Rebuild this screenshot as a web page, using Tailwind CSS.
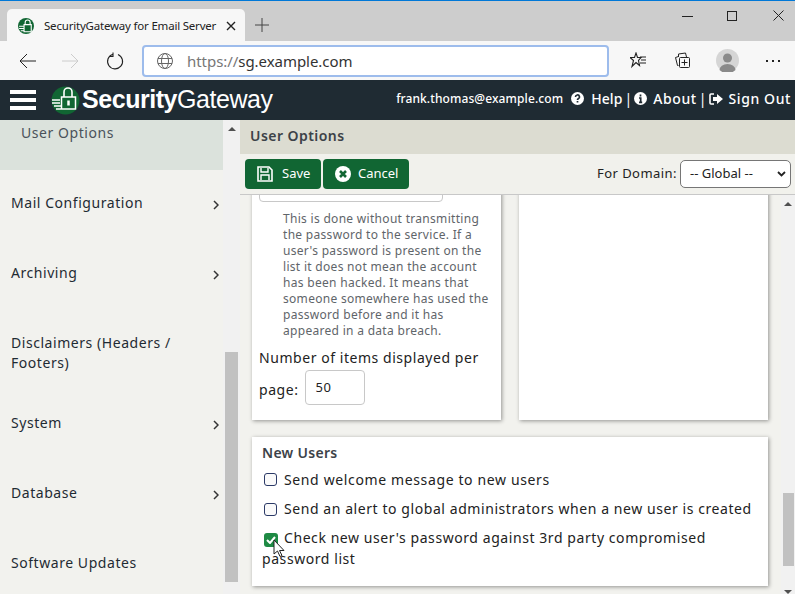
<!DOCTYPE html>
<html lang="en">
<head>
    <title>SecurityGateway for Email Servers</title>
    <meta charset="utf-8"/>
    <script src="https://cdn.jsdelivr.net/npm/@tailwindcss/browser@4"></script>
</head>
<body class="font-['Noto_Sans',sans-serif] overflow-hidden">
<div class="flex h-[594px] w-[795px] flex-col overflow-hidden bg-white">
    <!-- browser tab strip -->
    <div class="flex h-[41px] shrink-0 border-t border-[#0078d7] bg-[#cdcdcd]">
        <div class="ml-[7px] mt-[8px] flex h-[33px] w-[238px] items-center rounded-t-[5px] bg-[#f7f7f7] pl-[11px]">
            <svg class="h-[16px] w-[16px] shrink-0" viewBox="0 0 29 29">
                <circle cx="14.500" cy="14.500" r="14.500" fill="#116633"/>
                <path d="M13 12V8a4.500 4.500 0 0 1 9 0v4" fill="none" stroke="#fff" stroke-width="2"/>
                <path d="M11 12h13v13H11zM2 15h8M2 19h8M5 23h5" fill="none" stroke="#fff" stroke-width="2"/>
            </svg>
            <span class="ml-[10px] w-[178px] whitespace-nowrap text-[11.5px] tracking-[-0.2px] text-[#222]">SecurityGateway for Email Server</span>
            <svg class="ml-[4px] h-[10px] w-[10px] shrink-0" viewBox="0 0 10 10"><path d="M1 1l8 8M9 1l-8 8" stroke="#222" stroke-width="1.4"/></svg>
        </div>
        <svg class="ml-[10px] mt-[17px] h-[14px] w-[14px]" viewBox="0 0 14 14"><path d="M7 0v14M0 7h14" stroke="#444" stroke-width="1"/></svg>
        <div class="ml-auto flex">
            <svg class="mr-[34px] mt-[10px] h-[10px] w-[11px]" viewBox="0 0 11 10"><path d="M0 5.500h11" stroke="#222"/></svg>
            <svg class="mr-[35px] mt-[10px] h-[10px] w-[11px]" viewBox="0 0 11 10"><rect x=".5" y=".5" width="9" height="9" fill="none" stroke="#222"/></svg>
            <svg class="mr-[11px] mt-[9px] h-[11px] w-[11px]" viewBox="0 0 11 11"><path d="M.5.500l10 10M10.500.500l-10 10" stroke="#222"/></svg>
        </div>
    </div>
    <!-- browser toolbar -->
    <div class="flex h-[39px] shrink-0 items-center bg-[#f7f7f7]">
        <svg class="ml-[19px] h-[16px] w-[17px]" viewBox="0 0 17 16"><path d="M17 8H1M8 1L1 8l7 7" fill="none" stroke="#222" stroke-width="1"/></svg>
        <svg class="ml-[26px] h-[16px] w-[17px]" viewBox="0 0 17 16"><path d="M0 8h16M9 1l7 7-7 7" fill="none" stroke="#ccc" stroke-width="1"/></svg>
        <svg class="ml-[27px] h-[18px] w-[18px]" viewBox="0 0 18 18"><path d="M7 2.200A7.500 7.500 0 1 0 12 2.500M7 .5v4H3" fill="none" stroke="#222" stroke-width="1.100"/></svg>
        <div class="ml-[18px] flex h-[32px] w-[467px] items-center rounded-[4px] border-2 border-[#9dbcec] bg-white pl-[13px]">
            <svg class="h-[16px] w-[16px]" viewBox="0 0 16 16"><g fill="none" stroke="#666"><circle cx="8" cy="8" r="7.500"/><ellipse cx="8" cy="8" rx="3.500" ry="7.500"/><path d="M1 5.500h14M1 10.500h14"/></g></svg>
            <span class="ml-[14px] pt-[2px] text-[15px] tracking-[-0.05px] text-[#777]">https://<span class="text-[#333]">sg.example.com</span></span>
        </div>
        <svg class="ml-[21px] h-[17px] w-[17px]" viewBox="0 0 17 17"><path d="M6 1l1.500 4.500H11L8.500 8.500l1 5-3.500-3-4 4 1.500-6L0 5.500h4.500z" fill="none" stroke="#222" stroke-width="1.100"/><path d="M10 5h6M11 8h5M10 11h6" stroke="#222" stroke-width="1.200"/></svg>
        <svg class="ml-[27px] h-[17px] w-[17px]" viewBox="0 0 17 17"><path d="M4.500 13.500h-1l-2-8 3-1M4.500 5V2l7-1 1 4" fill="none" stroke="#222"/><rect x="5.500" y="5.500" width="10" height="10" rx="1" fill="none" stroke="#222"/><path d="M10.500 7.500v6M7.500 10.500h6" stroke="#222"/></svg>
        <svg class="ml-[25px] h-[23px] w-[23px]" viewBox="0 0 23 23"><circle cx="11.500" cy="11.500" r="11.500" fill="#d5d5d5"/><circle cx="11.500" cy="9" r="4.500" fill="#8a8a8a"/><path d="M3.500 21a8 6 0 0 1 16 0 11.500 11.500 0 0 1-16 0z" fill="#8a8a8a"/></svg>
        <div class="ml-[27px] flex gap-[4px]">
            <span class="h-[2px] w-[2px] bg-[#222]"></span><span class="h-[2px] w-[2px] bg-[#222]"></span><span class="h-[2px] w-[2px] bg-[#222]"></span>
        </div>
    </div>
    <!-- app header -->
    <div class="flex h-[40px] shrink-0 items-center bg-[#1f2b33] text-white">
        <div class="ml-[10px] flex w-[26px] flex-col gap-[4px]">
            <span class="h-[4px] bg-white"></span><span class="h-[4px] bg-white"></span><span class="h-[4px] bg-white"></span>
        </div>
        <svg class="ml-[15px] h-[29px] w-[29px] shrink-0" viewBox="0 0 29 29">
            <circle cx="14.500" cy="14.500" r="14" fill="#116633"/>
            <path d="M13 11V6a4 4 0 0 1 8 0v5" fill="none" stroke="#fff" stroke-width="1.600"/>
            <path d="M10.500 11h14v12h-14zM1 14h8M1 17h8M3 20h7M5 23h5" fill="none" stroke="#fff" stroke-width="1.500"/>
            <path d="M17.500 14.500v5" stroke="#fff" stroke-width="2.500"/>
        </svg>
        <span class="ml-[2px] whitespace-nowrap font-['Liberation_Sans',sans-serif] text-[25px] tracking-[-0.45px]"><b>Security</b>Gateway</span>
        <div class="ml-auto mr-[4px] flex items-center whitespace-nowrap pb-[3px]">
            <span class="text-[12px] font-medium tracking-[0.1px]">frank.thomas@example.com</span>
            <svg class="ml-[8px] h-[13px] w-[13px]" viewBox="0 0 13 13"><circle cx="6.500" cy="6.500" r="6.500" fill="#fff"/><path d="M4.500 5a2 2 0 1 1 2.800 1.800c-.6.300-.8.600-.8 1.200M6.500 9v1.500" fill="none" stroke="#1f2b33" stroke-width="1.700"/></svg>
            <span class="ml-[7px] text-[14px] font-medium tracking-[0.1px]">Help</span>
            <span class="ml-[2px] text-[14px]">|</span>
            <svg class="ml-[2px] h-[13px] w-[13px]" viewBox="0 0 13 13"><circle cx="6.500" cy="6.500" r="6.500" fill="#fff"/><path d="M6.500 2.500v2M5 6h1.700v4M5 10.300h3.200" fill="none" stroke="#1f2b33" stroke-width="1.700"/></svg>
            <span class="ml-[6px] text-[14px] font-medium tracking-[0.6px]">About</span>
            <span class="ml-[2px] text-[14px]">|</span>
            <svg class="ml-[2px] h-[12px] w-[14px]" viewBox="0 0 14 12"><path d="M5 1H2a1 1 0 0 0-1 1v8a1 1 0 0 0 1 1h3" fill="none" stroke="#fff" stroke-width="1.600"/><path d="M8 1l6 5-6 5V8H4V4h4z" fill="#fff"/></svg>
            <span class="ml-[6px] text-[14px] font-medium tracking-[0.6px]">Sign Out</span>
        </div>
    </div>
    <div class="flex min-h-0 flex-1">
        <!-- sidebar -->
        <div class="flex w-[240px] shrink-0 bg-[#f2f2ee]">
            <div class="w-[223px] shrink-0 overflow-hidden text-[14px] tracking-[0.55px] text-[#1f2b33]">
                <div class="h-[50px] bg-[#dbe2dc] pl-[21px] pt-[2px] text-[#4a525a]">User Options</div>
                <div class="flex h-[70px] items-start justify-between pl-[11px] pr-[4px] pt-[22px]">Mail Configuration
                    <svg class="mt-[8px] h-[10px] w-[6px]" viewBox="0 0 6 10"><path d="M1 1l4 4-4 4" fill="none" stroke="#333" stroke-width="1.500"/></svg>
                </div>
                <div class="flex h-[70px] items-start justify-between pl-[11px] pr-[4px] pt-[22px]">Archiving
                    <svg class="mt-[8px] h-[10px] w-[6px]" viewBox="0 0 6 10"><path d="M1 1l4 4-4 4" fill="none" stroke="#333" stroke-width="1.500"/></svg>
                </div>
                <div class="h-[90px] pl-[11px] pr-[30px] pt-[23px] leading-[20px]">Disclaimers (Headers / Footers)</div>
                <div class="flex h-[70px] items-start justify-between pl-[11px] pr-[4px] pt-[12px]">System
                    <svg class="mt-[8px] h-[10px] w-[6px]" viewBox="0 0 6 10"><path d="M1 1l4 4-4 4" fill="none" stroke="#333" stroke-width="1.500"/></svg>
                </div>
                <div class="flex h-[70px] items-start justify-between pl-[11px] pr-[4px] pt-[12px]">Database
                    <svg class="mt-[8px] h-[10px] w-[6px]" viewBox="0 0 6 10"><path d="M1 1l4 4-4 4" fill="none" stroke="#333" stroke-width="1.500"/></svg>
                </div>
                <div class="pl-[11px] pt-[12px]">Software Updates</div>
            </div>
            <div class="flex w-[17px] shrink-0 flex-col items-center bg-[#f1f1f1] pt-[7px]">
                <span class="h-0 w-0 border-x-[4px] border-b-[4px] border-x-transparent border-b-[#505050]"></span>
                <span class="mt-[221px] h-[230px] w-[13px] bg-[#c1c1c1]"></span>
            </div>
        </div>
        <!-- main panel -->
        <div class="flex min-w-0 flex-1 flex-col">
            <div class="flex h-[34px] shrink-0 items-center bg-[#dcdcd1] pb-[4px] pl-[10px] text-[14px] font-semibold tracking-[0.45px] text-[#3c4248]">User Options</div>
            <div class="flex h-[41px] shrink-0 items-center border-b border-[#c8c8c8] bg-[#f1f1ec] pl-[5px] pr-[4px]">
                <div class="flex h-[30px] w-[76px] items-center rounded-[4px] bg-[#116633] pl-[12px] text-[13px] text-white">
                    <svg class="h-[16px] w-[16px]" viewBox="0 0 16 16"><path d="M1 1h11l3 3v11H1z" fill="none" stroke="#fff" stroke-width="1.600"/><path d="M4 2v4h7V2M4 14v-5h8v5" fill="none" stroke="#fff" stroke-width="1.400"/></svg>
                    <span class="ml-[9px]">Save</span>
                </div>
                <div class="ml-[2px] flex h-[30px] w-[86px] items-center rounded-[4px] bg-[#116633] pl-[12px] text-[13px] text-white">
                    <svg class="h-[16px] w-[16px]" viewBox="0 0 16 16"><circle cx="8" cy="8" r="8" fill="#fff"/><path d="M5 5l6 6M11 5l-6 6" stroke="#116633" stroke-width="2.600"/></svg>
                    <span class="ml-[7px]">Cancel</span>
                </div>
                <span class="ml-auto text-[13px] tracking-[0.45px] text-[#222]">For Domain:</span>
                <div class="ml-[3px] flex h-[28px] w-[111px] items-center justify-between rounded-[5px] border border-[#767676] bg-white pl-[9px] pr-[4px] text-[13px] text-[#222]">
                    -- Global --
                    <svg class="h-[6px] w-[9px]" viewBox="0 0 9 6"><path d="M1 1l3.500 3.500L8 1" fill="none" stroke="#222" stroke-width="1.800"/></svg>
                </div>
            </div>
            <div class="flex min-h-0 flex-1 overflow-hidden bg-[#f2f2ee]">
                <div class="min-w-0 flex-1 pl-[12px] pr-[16px]">
                    <div class="-mt-[7px] flex h-[232px] gap-[18px]">
                        <div class="w-[249px] shrink-0 bg-white shadow-[1px_1px_4px_rgba(0,0,0,0.4)]">
                            <div class="ml-[7px] h-[14px] w-[184px] rounded-b-[4px] border border-[#c8c8c8]"></div>
                            <p class="ml-[31px] mt-[9px] w-[215px] text-[12px] leading-[16px] tracking-[0.3px] text-[#5f656a]">This is done without transmitting the password to the service. If a user's password is present on the list it does not mean the account has been hacked. It means that someone somewhere has used the password before and it has appeared in a data breach.</p>
                            <div class="ml-[7px] mt-[7px] text-[14px] leading-[24px] tracking-[0.55px] text-[#222]">Number of items displayed per</div>
                            <div class="ml-[7px] flex items-center text-[14px] tracking-[0.55px] text-[#222]"><span class="pt-[4px]">page:</span>
                                <span class="ml-[7px] flex h-[35px] w-[60px] items-center rounded-[4px] border border-[#c8c8c8] pl-[9px] text-[13px]">50</span>
                            </div>
                        </div>
                        <div class="w-[249px] shrink-0 bg-white shadow-[1px_1px_4px_rgba(0,0,0,0.4)]"></div>
                    </div>
                    <div class="mt-[17px] h-[149px] w-[516px] bg-white pl-[10px] pt-[6px] text-[14px] tracking-[0.57px] text-[#222] shadow-[1px_1px_4px_rgba(0,0,0,0.4)]">
                        <div class="font-semibold leading-[20px] tracking-[0.3px] text-[#3c4248]">New Users</div>
                        <div class="mt-[2px] flex h-[29px] items-center">
                            <span class="ml-[2px] h-[13px] w-[13px] rounded-[3px] border border-[#2b3a67] bg-[#fafafa]"></span>
                            <span class="ml-[7px] tracking-[0.63px]">Send welcome message to new users</span>
                        </div>
                        <div class="flex h-[29px] items-center">
                            <span class="ml-[2px] mt-[2px] h-[13px] w-[13px] rounded-[3px] border border-[#2b3a67] bg-[#fafafa]"></span>
                            <span class="ml-[7px]">Send an alert to global administrators when a new user is created</span>
                        </div>
                        <p class="relative mt-[4px] w-[480px] indent-[22px] leading-[21px]">Check new user's password against 3rd party compromised password list
                            <span class="absolute left-[2px] top-[6px] flex h-[14px] w-[14px] items-center justify-center rounded-[3px] bg-[#1e8a44]">
                                <svg class="h-[8px] w-[10px]" viewBox="0 0 10 8"><path d="M1 4l3 3 5-6" fill="none" stroke="#fff" stroke-width="2"/></svg>
                            </span>
                            <svg class="absolute left-[11px] top-[12px] h-[19px] w-[12px]" viewBox="0 0 12 19"><path d="M1 1v14l3.500-3 2.500 5.500 2-1-2.500-5H11z" fill="#fff" stroke="#222" stroke-width="1"/></svg>
                        </p>
                    </div>
                </div>
                <div class="flex w-[14px] shrink-0 flex-col items-center bg-[#f1f1f1]">
                    <span class="mt-[7px] h-0 w-0 border-x-[4px] border-b-[4px] border-x-transparent border-b-[#505050]"></span>
                    <span class="mt-[287px] h-[73px] w-[11px] bg-[#c1c1c1]"></span>
                    <span class="mt-[24px] h-0 w-0 border-x-[4px] border-t-[4px] border-x-transparent border-t-[#505050]"></span>
                </div>
            </div>
        </div>
    </div>
</div>
</body>
</html>
